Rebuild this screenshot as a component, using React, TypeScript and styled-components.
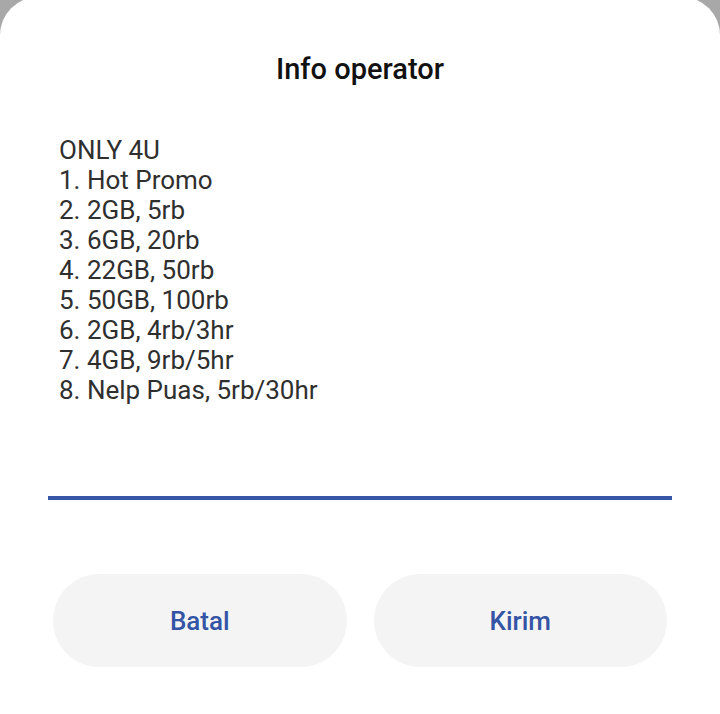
import React from "react";
import styled, { createGlobalStyle } from "styled-components";

const GlobalStyle = createGlobalStyle`
  html, body {
    margin: 0;
    padding: 0;
    background: #a8a8a8;
    width: 720px;
    height: 714px;
    overflow: hidden;
  }
  * { box-sizing: border-box; }
`;

const Sheet = styled.div`
  width: 720px;
  height: 717px;
  margin-top: -3px;
  background: #ffffff;
  border-radius: 38px 38px 0 0;
  display: flex;
  flex-direction: column;
  font-family: Roboto, "Liberation Sans", sans-serif;
  padding-top: 54px;
`;

const Title = styled.h1`
  margin: 0;
  font-size: 29px;
  line-height: 36px;
  font-weight: 500;
  color: #111111;
  text-align: center;
`;

const Message = styled.div`
  margin-top: 48px;
  padding: 0 59px;
  font-size: 26px;
  line-height: 30px;
  color: #2f2f2f;
  height: 361px;
`;

const Line = styled.div`
  white-space: pre;
`;

const Divider = styled.div`
  margin: 0 48px;
  height: 4px;
  background: #3756a6;
`;

const Actions = styled.div`
  display: grid;
  grid-template-columns: 1fr 1fr;
  gap: 27px;
  padding: 0 53px;
  margin-top: 74px;
`;

const ActionButton = styled.button`
  height: 93px;
  border: none;
  border-radius: 47px;
  background: #f4f4f4;
  color: #3454a5;
  font-family: Roboto, "Liberation Sans", sans-serif;
  font-size: 26px;
  font-weight: 500;
  padding-top: 2px;
  cursor: pointer;
`;

const lines = [
  "ONLY 4U",
  "1. Hot Promo",
  "2. 2GB, 5rb",
  "3. 6GB, 20rb",
  "4. 22GB, 50rb",
  "5. 50GB, 100rb",
  "6. 2GB, 4rb/3hr",
  "7. 4GB, 9rb/5hr",
  "8. Nelp Puas, 5rb/30hr",
];

export default function App() {
  return (
    <>
      <GlobalStyle />
      <Sheet>
        <Title>Info operator</Title>
        <Message>
          {lines.map((l) => (
            <Line key={l}>{l}</Line>
          ))}
        </Message>
        <Divider />
        <Actions>
          <ActionButton>Batal</ActionButton>
          <ActionButton>Kirim</ActionButton>
        </Actions>
      </Sheet>
    </>
  );
}
